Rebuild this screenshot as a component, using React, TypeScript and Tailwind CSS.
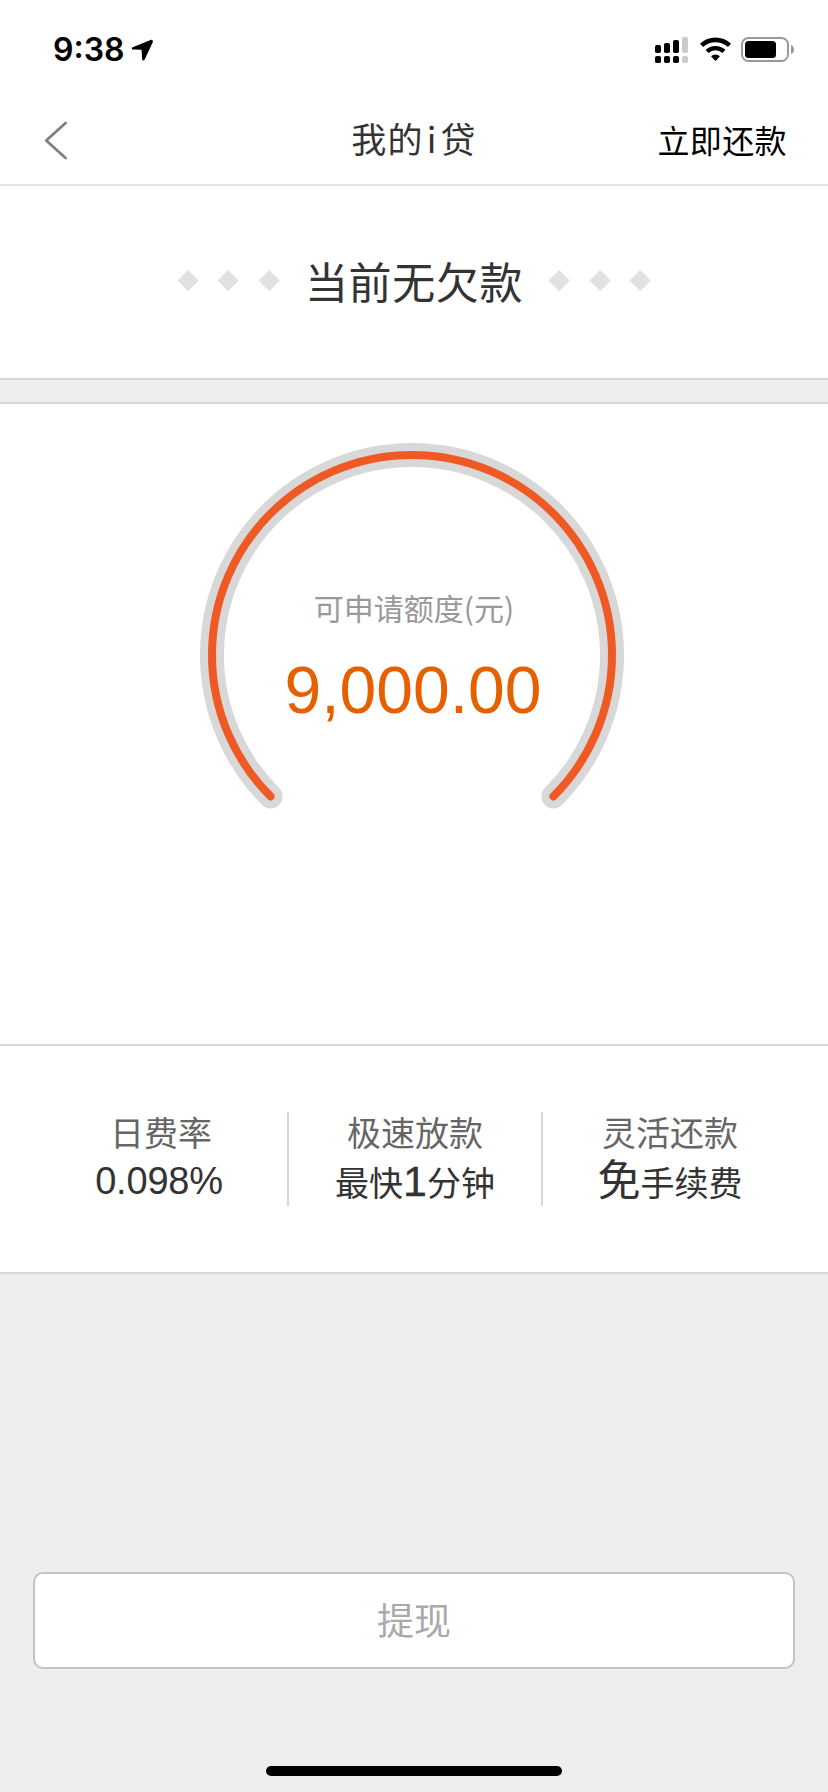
import React from 'react'

interface Feature {
  title: string
  value: React.ReactNode
}

const features: Feature[] = [
  {
    title: '日费率',
    value: (
      <div className="mt-[2px] mr-[4px] h-[44px] font-['Liberation_Sans',sans-serif] text-[38px] leading-[44px] tracking-[-0.2px]">
        0.098%
      </div>
    ),
  },
  {
    title: '极速放款',
    value: (
      <div className="flex h-[50px] items-baseline text-[34px] leading-[52px]">
        最快
        <span className="font-['Liberation_Sans',sans-serif] text-[43px] leading-[44px] [-webkit-text-stroke:0.3px_#333]">1</span>
        分钟
      </div>
    ),
  },
  {
    title: '灵活还款',
    value: (
      <div className="flex h-[50px] items-baseline text-[34px] leading-[50px]">
        <span className="text-[43px] leading-[42px]">免</span>
        手续费
      </div>
    ),
  },
]

const signalBars = [
  { x: 0, y: 8, h: 8, fill: '#000' },
  { x: 9, y: 6, h: 10, fill: '#000' },
  { x: 18, y: 3, h: 13, fill: '#000' },
  { x: 27, y: 0, h: 16, fill: '#ccc' },
]

function StatusBar() {
  return (
    <div className="flex h-24 items-start justify-between pr-[33px] pl-[53px]">
      <div className="flex items-start">
        <span className="mt-[30px] font-['Inter',sans-serif] text-[32px] leading-10 font-semibold text-black">9:38</span>
        <svg className="mt-[39px] ml-[6px]" width="23" height="23" viewBox="0 0 22 22">
          <path
            d="M18.700.900 1.600 7.900C.300 8.500.500 10 1.900 10.100l8.200.300.500 8.800c.100 1.500 1.900 1.800 2.500.300L20.900 2.900c.500-1.300-.700-2.600-2.200-2Z"
            fill="#000"
          />
        </svg>
      </div>
      <div className="flex items-start">
        <svg className="mt-[37px]" width="33" height="26" viewBox="0 0 33 26">
          {signalBars.map((bar) => (
            <g key={bar.x} fill={bar.fill}>
              <rect x={bar.x} y={bar.y} width="6" height={bar.h} rx="1.8" />
              <rect x={bar.x} y="19" width="6" height="7" rx="1.8" />
            </g>
          ))}
        </svg>
        <svg className="mt-[37px] ml-[12px]" width="32" height="24" viewBox="0 0 32 24">
          <path d="M1.500 8.400a20.500 20.500 0 0 1 28 0" fill="none" stroke="#000" strokeWidth="4.600" />
          <path d="M7 14.400a12.600 12.600 0 0 1 17 0" fill="none" stroke="#000" strokeWidth="4.400" />
          <path d="M11.100 19.200a6.800 6.800 0 0 1 8.800 0l-3.500 4a1.300 1.300 0 0 1-1.800 0Z" fill="#000" />
        </svg>
        <svg className="mt-[37px] ml-[9px]" width="54" height="25" viewBox="0 0 54 25">
          <rect x="1" y="1" width="46" height="23" rx="6.5" fill="none" stroke="#999" strokeWidth="2" />
          <rect x="4" y="4" width="31" height="17" rx="3.5" fill="#000" />
          <path d="M50 8c2 .8 3 2.400 3 4.500s-1 3.700-3 4.500Z" fill="#999" />
        </svg>
      </div>
    </div>
  )
}

function NavBar() {
  return (
    <div className="grid h-[90px] grid-cols-3 items-center border-b-2 border-[#e3e3e3] pr-[41px] pl-[44px]">
      <svg width="24" height="39" viewBox="0 0 24 39">
        <path d="M21.600 2 2.200 19.500 21.600 37" fill="none" stroke="#808080" strokeWidth="2.800" strokeLinecap="round" strokeLinejoin="round" />
      </svg>
      <h1 className="mr-[3px] mb-[5px] text-center text-[35px] leading-[44px] tracking-[1.200px] text-[#333]">
        我的<span className="mx-[3px]">i</span>贷
      </h1>
      <button className="mb-[3px] text-right text-[32px] leading-[44px] tracking-[0.400px] text-black">立即还款</button>
    </div>
  )
}

function Diamonds() {
  return (
    <div className="flex gap-[26px]">
      {[0, 1, 2].map((i) => (
        <div key={i} className="size-[14.500px] rotate-45 bg-[#e1e1e1]" />
      ))}
    </div>
  )
}

function Gauge() {
  return (
    <div className="relative h-[424px] w-[424px]">
      <svg width="424" height="424" viewBox="0 0 424 424" fill="none" strokeLinecap="round">
        <path d="M70.600 353.400A200 200 0 1 1 353.400 353.400" stroke="#d8d8d8" strokeWidth="24" />
        <path d="M70.600 353.400A200 200 0 1 1 353.400 353.400" stroke="#ef5a24" strokeWidth="8" />
      </svg>
      <div className="absolute inset-x-0 top-[142px] flex flex-col items-center">
        <div className="ml-[4px] text-[30px] leading-[44px] text-[#999]">可申请额度(元)</div>
        <div className="mt-[23px] ml-[2px] font-['Liberation_Sans',sans-serif] text-[66px] leading-[76px] text-[#e66000]">
          9,000.00
        </div>
      </div>
    </div>
  )
}

export default function App() {
  return (
    <div className="flex h-[1792px] w-[828px] flex-col overflow-hidden bg-[#eee] font-['Noto_Sans_CJK_SC',sans-serif]">
      <div className="bg-white">
        <StatusBar />
        <NavBar />
        <div className="flex h-[192px] items-center justify-center gap-[29px] pb-[3px]">
          <Diamonds />
          <h2 className="-mt-px text-[43px] leading-[60px] tracking-[0.600px] text-[#333]">当前无欠款</h2>
          <Diamonds />
        </div>
      </div>

      <div className="h-[26px] shrink-0 border-y-2 border-[#d8d8d8]" />

      <div className="flex h-[642px] shrink-0 justify-center border-b-2 border-[#d8d8d8] bg-white pt-[39px] pr-1">
        <Gauge />
      </div>

      <div className="grid h-[228px] shrink-0 grid-cols-3 border-b-2 border-[#d8d8d8] bg-white pt-[66px] pr-[31px] pl-[35px]">
        {features.map((feature) => (
          <div
            key={feature.title}
            className="flex h-[94px] flex-col items-center border-r-2 border-[#d8d8d8] text-[#333] last:border-r-0"
          >
            <div className="h-[45px] text-[34px] leading-[40px] text-[#666]">{feature.title}</div>
            {feature.value}
          </div>
        ))}
      </div>

      <div className="flex grow flex-col items-center justify-end pb-4">
        <button className="mb-[97px] h-[97px] w-[762px] rounded-[10px] border-2 border-[#c3c3c3] bg-white pb-[2px] text-[37px] text-[#aaa]">
          提现
        </button>
        <div className="h-[10px] w-[296px] rounded-full bg-black" />
      </div>
    </div>
  )
}
